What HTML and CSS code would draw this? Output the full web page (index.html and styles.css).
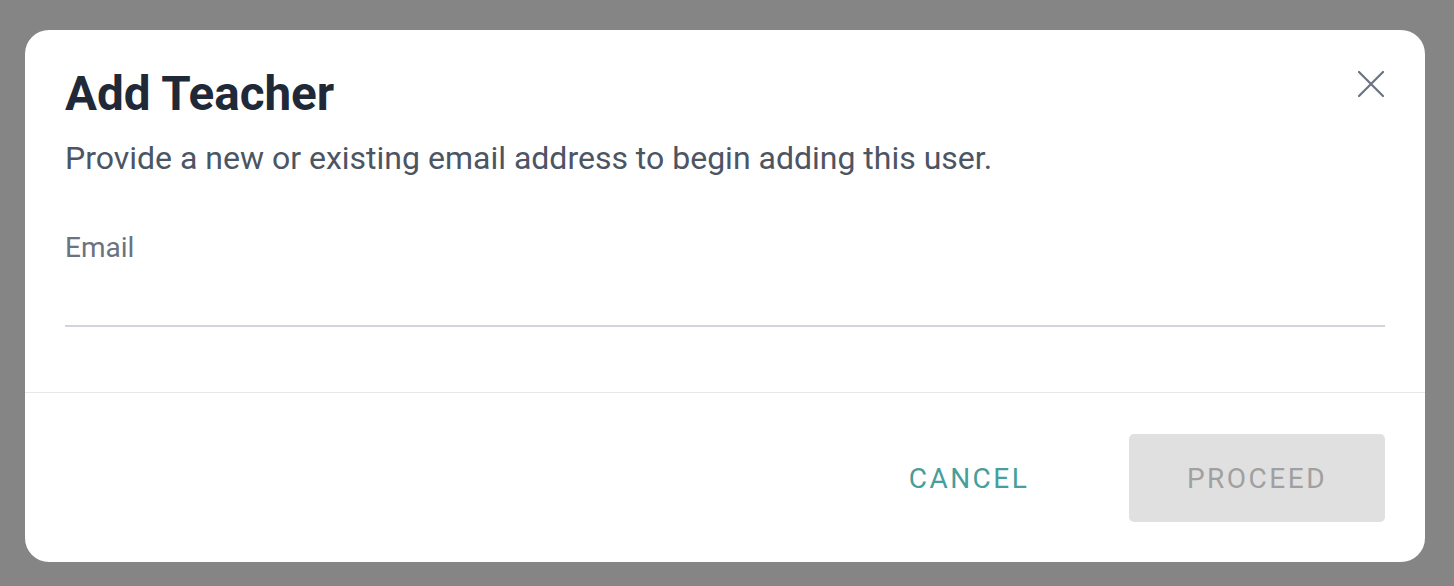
FILE: index.html
```html
<!DOCTYPE html>
<html lang="en">
<head>
    <meta charset="UTF-8">
    <meta name="viewport" content="width=device-width, initial-scale=1.0">
    <title>Add Teacher</title>
    <link rel="stylesheet" href="styles.css">
</head>
<body>

<div class="overlay">
    <div class="modal">
        <div class="modal-body">
            <div class="modal-header">
                <h1 class="modal-title">Add Teacher</h1>
                <button class="close-button" aria-label="Close">
                    <svg width="26" height="26" viewBox="0 0 26 26">
                        <path d="M1 1 L25 25 M25 1 L1 25" stroke="#6b7280" stroke-width="2.2" stroke-linecap="round" fill="none"/>
                    </svg>
                </button>
            </div>
            <p class="modal-text">Provide a new or existing email address to begin adding this user.</p>

            <!-- email field -->
            <label class="field">
                <span class="field-label">Email</span>
                <input type="email" class="field-input">
            </label>
        </div>

        <div class="modal-footer">
            <button class="text-button">CANCEL</button>
            <button class="proceed-button" disabled>PROCEED</button>
        </div>
    </div>
</div>

</body>
</html>
```

FILE: styles.css
```css
body {
    font-family: 'Roboto', 'Liberation Sans', sans-serif;
    background-color: #858585;
    margin: 0;
    padding: 0;
}

.overlay {
    padding: 30px 29px 24px 25px;
}

.modal {
    background-color: white;
    border-radius: 24px;
    height: 532px;
    display: flex;
    flex-direction: column;
}

.modal-body {
    padding: 0 40px;
    border-bottom: 1px solid #e5e7eb;
    height: 363px;
    box-sizing: border-box;
}

.modal-header {
    display: flex;
    justify-content: space-between;
    align-items: flex-start;
}

.modal-title {
    margin: 0;
    padding-top: 36px;
    font-size: 47.6px;
    line-height: 56px;
    font-weight: 700;
    color: #1f2937;
}

.close-button {
    background: none;
    border: none;
    padding: 0;
    margin-top: 41px;
    margin-right: 1px;
    width: 26px;
    height: 26px;
    cursor: pointer;
    display: flex;
}

.modal-text {
    margin: 0;
    margin-top: 16px;
    font-size: 32px;
    line-height: 40px;
    color: #4b5563;
}

.field {
    display: block;
    margin-top: 54px;
}

.field-label {
    display: block;
    font-size: 28px;
    line-height: 32px;
    color: #6b7280;
}

.field-input {
    display: block;
    width: 100%;
    box-sizing: border-box;
    border: none;
    border-bottom: 2px solid #d1d5db;
    height: 63px;
    padding: 0;
    outline: none;
    font-size: 28px;
    font-family: inherit;
}

.modal-footer {
    display: flex;
    justify-content: flex-end;
    gap: 32px;
    padding: 41px 40px 40px;
}

.text-button,
.proceed-button {
    width: 256px;
    height: 88px;
    border: none;
    border-radius: 5px;
    font-family: inherit;
    font-size: 28px;
    font-weight: 400;
    letter-spacing: 2.5px;
    cursor: pointer;
}

.text-button {
    background: none;
    color: #479e9a;
}

.proceed-button {
    background-color: #e0e0e0;
    color: #a0a0a0;
    cursor: default;
}
```
